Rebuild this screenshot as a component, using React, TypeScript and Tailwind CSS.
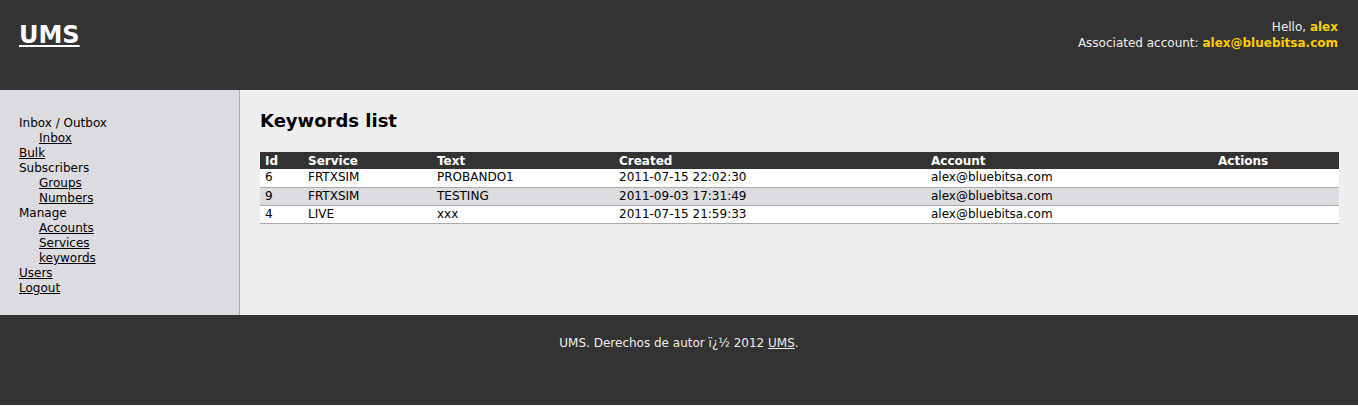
import React from 'react';

const rows = [
  { id: '6', service: 'FRTXSIM', text: 'PROBANDO1', created: '2011-07-15 22:02:30', account: 'alex@bluebitsa.com' },
  { id: '9', service: 'FRTXSIM', text: 'TESTING', created: '2011-09-03 17:31:49', account: 'alex@bluebitsa.com' },
  { id: '4', service: 'LIVE', text: 'xxx', created: '2011-07-15 21:59:33', account: 'alex@bluebitsa.com' },
];

const NavLink = ({ label, sub }: { label: string; sub?: boolean }) => (
  <div className={sub ? 'pl-5' : ''}>
    <a href="#" className="underline text-black">{label}</a>
  </div>
);

export default function App() {
  return (
    <div className="bg-[#eeeeee] text-[12px] leading-[15px]" style={{ fontFamily: '"DejaVu Sans", Verdana, sans-serif' }}>
      <header className="h-[90px] bg-[#333333] flex justify-between px-[20px]">
        <h1 className="pt-[21px]">
          <a href="#" className="text-white font-bold text-[24px] leading-[28px] underline -ml-px">UMS</a>
        </h1>
        <div className="pt-[19px] text-right text-[#eeeeee] leading-[16px]">
          <div>Hello, <span className="font-bold text-[#ffcc00]">alex</span></div>
          <div>Associated account: <span className="font-bold text-[#ffcc00]">alex@bluebitsa.com</span></div>
        </div>
      </header>
      <div className="flex h-[225px]">
        <aside className="w-[240px] shrink-0 bg-[#dcdbe0] border-r border-[#aaaaaa] pl-[19px] pt-[26px]">
          <div>Inbox / Outbox</div>
          <NavLink label="Inbox" sub />
          <NavLink label="Bulk" />
          <div>Subscribers</div>
          <NavLink label="Groups" sub />
          <NavLink label="Numbers" sub />
          <div>Manage</div>
          <NavLink label="Accounts" sub />
          <NavLink label="Services" sub />
          <NavLink label="keywords" sub />
          <NavLink label="Users" />
          <NavLink label="Logout" />
        </aside>
        <main className="flex-1 pl-[20px] pr-[19px] pt-[20px]">
          <h2 className="font-bold text-[18px] leading-[22px] mb-[20px]">Keywords list</h2>
          <table className="w-full border-collapse text-[12px] leading-[14px]">
            <thead>
              <tr className="bg-[#333333] text-white text-left">
                <th className="w-[43px] h-[17px] px-[5px] py-0 font-bold">Id</th>
                <th className="w-[129px] px-[5px] py-0 font-bold">Service</th>
                <th className="w-[182px] px-[5px] py-0 font-bold">Text</th>
                <th className="w-[312px] px-[5px] py-0 font-bold">Created</th>
                <th className="w-[287px] px-[5px] py-0 font-bold">Account</th>
                <th className="px-[5px] py-0 font-bold">Actions</th>
              </tr>
            </thead>
            <tbody>
              {rows.map((r, i) => (
                <tr key={r.id} className={`${i % 2 === 1 ? 'bg-[#dcdbe0]' : 'bg-white'} border-b border-[#aaaaaa]`}>
                  <td className="h-[18px] px-[5px] pt-0 pb-px">{r.id}</td>
                  <td className="px-[5px] pt-0 pb-px">{r.service}</td>
                  <td className="px-[5px] pt-0 pb-px">{r.text}</td>
                  <td className="px-[5px] pt-0 pb-px">{r.created}</td>
                  <td className="px-[5px] pt-0 pb-px">{r.account}</td>
                  <td className="px-[5px] pt-0 pb-px"></td>
                </tr>
              ))}
            </tbody>
          </table>
        </main>
      </div>
      <footer className="h-[90px] bg-[#333333] text-[#eeeeee] text-center pt-[21px]">
        UMS. Derechos de autor ï¿½ 2012 <a href="#" className="underline text-[#eeeeee]">UMS</a>.
      </footer>
    </div>
  );
}
